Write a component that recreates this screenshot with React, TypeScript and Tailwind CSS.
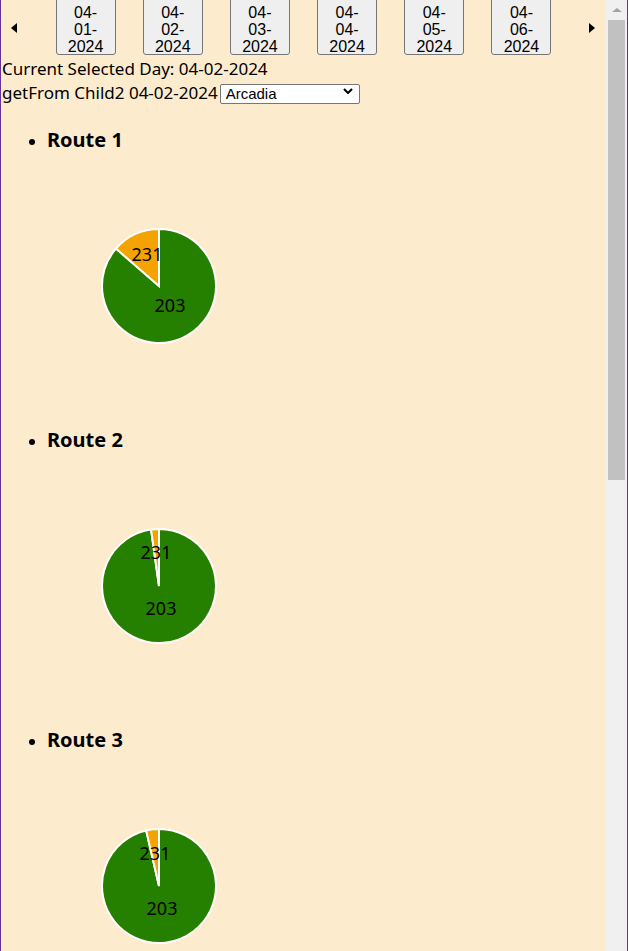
import React from "react";

const dates = ["04-01-2024", "04-02-2024", "04-03-2024", "04-04-2024", "04-05-2024", "04-06-2024"];

function pt(cx: number, cy: number, r: number, deg: number) {
  const a = (deg * Math.PI) / 180;
  return [cx + r * Math.sin(a), cy - r * Math.cos(a)];
}

function slice(cx: number, cy: number, r: number, a1: number, a2: number) {
  const [x1, y1] = pt(cx, cy, r, a1);
  const [x2, y2] = pt(cx, cy, r, a2);
  const large = a2 - a1 > 180 ? 1 : 0;
  return `M ${cx} ${cy} L ${x1} ${y1} A ${r} ${r} 0 ${large} 1 ${x2} ${y2} Z`;
}

type Route = { name: string; orange: number; l1: [number, number]; l2: [number, number] };

const routes: Route[] = [
  { name: "Route 1", orange: 49, l1: [-12, -32], l2: [11, 19] },
  { name: "Route 2", orange: 8, l1: [-3, -34], l2: [2, 22] },
  { name: "Route 3", orange: 13, l1: [-4, -33], l2: [3, 22] },
];

function Pie({ r }: { r: Route }) {
  const cx = 60;
  const cy = 60;
  const R = 57;
  return (
    <svg width={120} height={120} viewBox="0 0 120 120" className="block">
      <path d={slice(cx, cy, R, 0, 360 - r.orange)} fill="#268000" stroke="#ffffff" strokeWidth={2} />
      <path d={slice(cx, cy, R, 360 - r.orange, 360)} fill="#f5a300" stroke="#ffffff" strokeWidth={2} />
      <text
        x={cx + r.l1[0]}
        y={cy + r.l1[1]}
        textAnchor="middle"
        dominantBaseline="central"
        fontSize={18}
        fontFamily="'Noto Sans', sans-serif"
        fill="#000"
      >
        231
      </text>
      <text
        x={cx + r.l2[0]}
        y={cy + r.l2[1]}
        textAnchor="middle"
        dominantBaseline="central"
        fontSize={18}
        fontFamily="'Noto Sans', sans-serif"
        fill="#000"
      >
        203
      </text>
    </svg>
  );
}

export default function App() {
  return (
    <div className="w-[628px] h-[951px] overflow-hidden flex border-x border-[#663399] bg-[#fdebce] text-black font-['Noto_Sans',sans-serif]">
      <div className="flex-1 min-w-0 overflow-hidden">
        {/* carousel */}
        <div className="flex h-[56px] items-start">
          <div className="w-[40px] h-[56px] flex items-center pl-[10px]">
            <div className="w-0 h-0 border-y-[5px] border-y-transparent border-r-[6px] border-r-black" />
          </div>
          <div className="w-[524px] flex pl-[1px]">
            {dates.map((d) => {
              const [a, b, c] = d.split("-");
              return (
                <div key={d} className="w-[87.4px] flex justify-center">
                  <button className="w-[60px] h-[60px] -mt-[5px] box-border border border-[#767676] rounded-[3px] bg-[#efefef] pt-[8px] font-['Liberation_Sans',Arial,sans-serif] text-[16px] leading-[17px] text-black text-center">
                    <div>{a}-</div>
                    <div>{b}-</div>
                    <div>{c}</div>
                  </button>
                </div>
              );
            })}
          </div>
          <div className="flex-1 h-[56px] flex items-center justify-end pr-[11px]">
            <div className="w-0 h-0 border-y-[5px] border-y-transparent border-l-[6px] border-l-black" />
          </div>
        </div>
        <div className="pl-[1px] text-[17px] leading-[24px] mt-[1px]">Current Selected Day: 04-02-2024</div>
        <div className="pl-[1px] text-[17px] leading-[24px] flex items-center">
          <span>getFrom Child2 04-02-2024</span>
          <div className="relative ml-[2px]">
            <select className="appearance-none w-[140px] h-[20px] border border-[#767676] rounded-[2px] bg-white pl-[5px] text-[15px] leading-[18px] font-['Liberation_Sans',Arial,sans-serif] text-black outline-none">
              <option>Arcadia</option>
            </select>
            <svg className="absolute right-[7px] top-[7px]" width="10" height="6" viewBox="0 0 10 6">
              <path d="M1 1 L5 5 L9 1" fill="none" stroke="#000" strokeWidth="2" />
            </svg>
          </div>
        </div>
        <ul className="list-disc pl-[46px] mt-[23px]">
          {routes.map((r) => (
            <li key={r.name} className="h-[300px]">
              <div className="text-[20px] font-bold leading-[24px]">{r.name}</div>
              <div className="ml-[52px] mt-[74px]">
                <Pie r={r} />
              </div>
            </li>
          ))}
        </ul>
      </div>
      <div className="w-[21px] h-full bg-[#f0f0f0] flex flex-col items-center">
        <div className="h-[20px] w-full flex items-center justify-center">
          <div className="w-0 h-0 border-x-[5px] border-x-transparent border-b-[4px] border-b-[#a3a3a3]" />
        </div>
        <div className="w-[17px] h-[460px] bg-[#c1c1c1]" />
      </div>
    </div>
  );
}
